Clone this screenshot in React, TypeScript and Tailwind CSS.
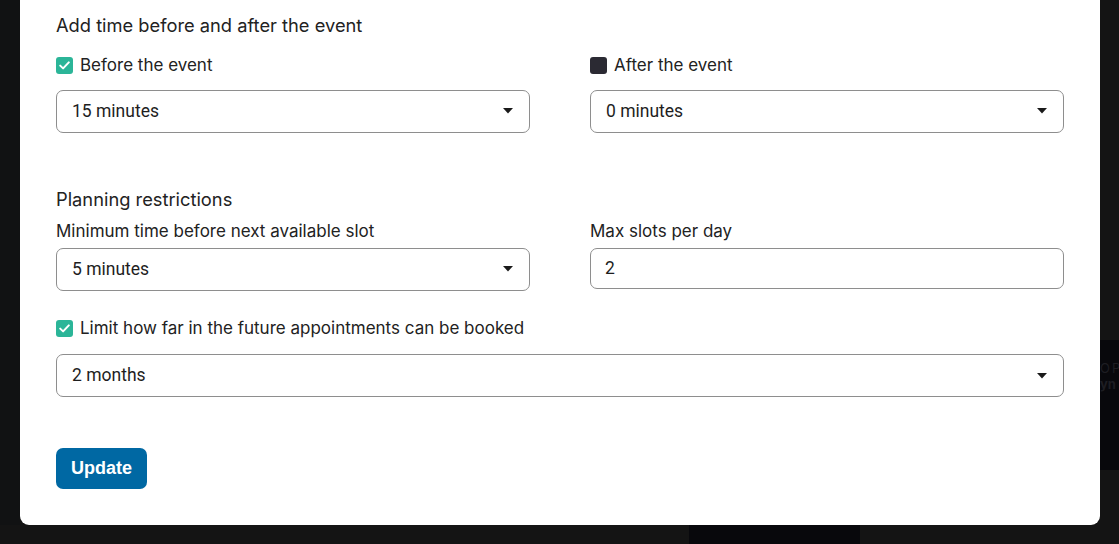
import React from "react";

function Caret() {
  return (
    <svg width="10" height="6" viewBox="0 0 10 6" className="shrink-0">
      <path d="M0 0h10L5 5.5z" fill="#1a1a1a" />
    </svg>
  );
}

function Select({ value }: { value: string }) {
  return (
    <div className="flex h-[43px] w-full items-center justify-between rounded-[7px] border border-[#8e8e8e] bg-white pl-[15px] pr-[16px] text-[17.5px] text-[#1e1e1e] [font-family:Roboto,sans-serif]">
      <span>{value}</span>
      <Caret />
    </div>
  );
}

function Checkbox({ checked }: { checked: boolean }) {
  if (!checked) {
    return <span className="block h-[17px] w-[17px] rounded-[3px] bg-[#2b2a33]" />;
  }
  return (
    <span className="flex h-[17px] w-[17px] items-center justify-center rounded-[3px] bg-[#2bb598]">
      <svg width="11" height="9" viewBox="0 0 11 9">
        <path d="M1.2 4.6l2.9 2.8L9.8 1.4" fill="none" stroke="#fff" strokeWidth="2" strokeLinecap="round" strokeLinejoin="round" />
      </svg>
    </span>
  );
}

function CheckRow({ checked, label }: { checked: boolean; label: string }) {
  return (
    <label className="flex items-center gap-[7px]">
      <Checkbox checked={checked} />
      <span>{label}</span>
    </label>
  );
}

export default function App() {
  return (
    <div className="flex h-[544px] w-[1119px] flex-col overflow-hidden bg-[#141414] [font-family:Inter,sans-serif]">
      <div className="flex flex-1">
        <div className="w-[20px] shrink-0 bg-[#111213]" />
        <div className="w-[1080px] shrink-0 rounded-b-[9px] bg-white px-[36px] pt-[13px] text-[17px] text-[#222]">
          <p className="text-[18.3px] leading-[24px]">Add time before and after the event</p>

          <div className="mt-[16px] grid grid-cols-2 gap-x-[60px]">
            <div>
              <CheckRow checked label="Before the event" />
              <div className="mt-[11px]">
                <Select value="15 minutes" />
              </div>
            </div>
            <div>
              <CheckRow checked={false} label="After the event" />
              <div className="mt-[11px]">
                <Select value="0 minutes" />
              </div>
            </div>
          </div>

          <p className="mt-[54px] text-[18.3px] leading-[24px]">Planning restrictions</p>
          <div className="mt-[8px] grid grid-cols-2 gap-x-[60px]">
            <div>
              <p className="leading-[24px]">Minimum time before next available slot</p>
              <div className="mt-[5px]">
                <Select value="5 minutes" />
              </div>
            </div>
            <div>
              <p className="leading-[24px]">Max slots per day</p>
              <div className="mt-[5px] flex h-[41px] items-center rounded-[7px] border border-[#8e8e8e] pl-[14px] text-[17.5px] text-[#1e1e1e] [font-family:Roboto,sans-serif]">
                2
              </div>
            </div>
          </div>

          <div className="mt-[25px]">
            <CheckRow checked label="Limit how far in the future appointments can be booked" />
          </div>
          <div className="mt-[13px]">
            <Select value="2 months" />
          </div>

          <button className="mt-[51px] h-[41px] rounded-[7px] bg-[#0068a3] px-[15px] text-[18px] font-bold text-white [font-family:'Liberation_Sans',Arial,sans-serif]">
            Update
          </button>
        </div>
        <div className="flex min-w-0 flex-1 flex-col overflow-hidden">
          <div className="h-[340px]" />
          <div className="h-[130px] overflow-hidden whitespace-nowrap bg-[#08080c] pt-[20px] text-[13px] leading-[16px] text-[#1d1d22]">
            <p className="tracking-[2px]">OP</p>
            <p className="font-bold">yn</p>
          </div>
        </div>
      </div>
      <div className="flex h-[19px]">
        <div className="w-[689px]" />
        <div className="w-[171px] bg-[#08080c]" />
      </div>
    </div>
  );
}
